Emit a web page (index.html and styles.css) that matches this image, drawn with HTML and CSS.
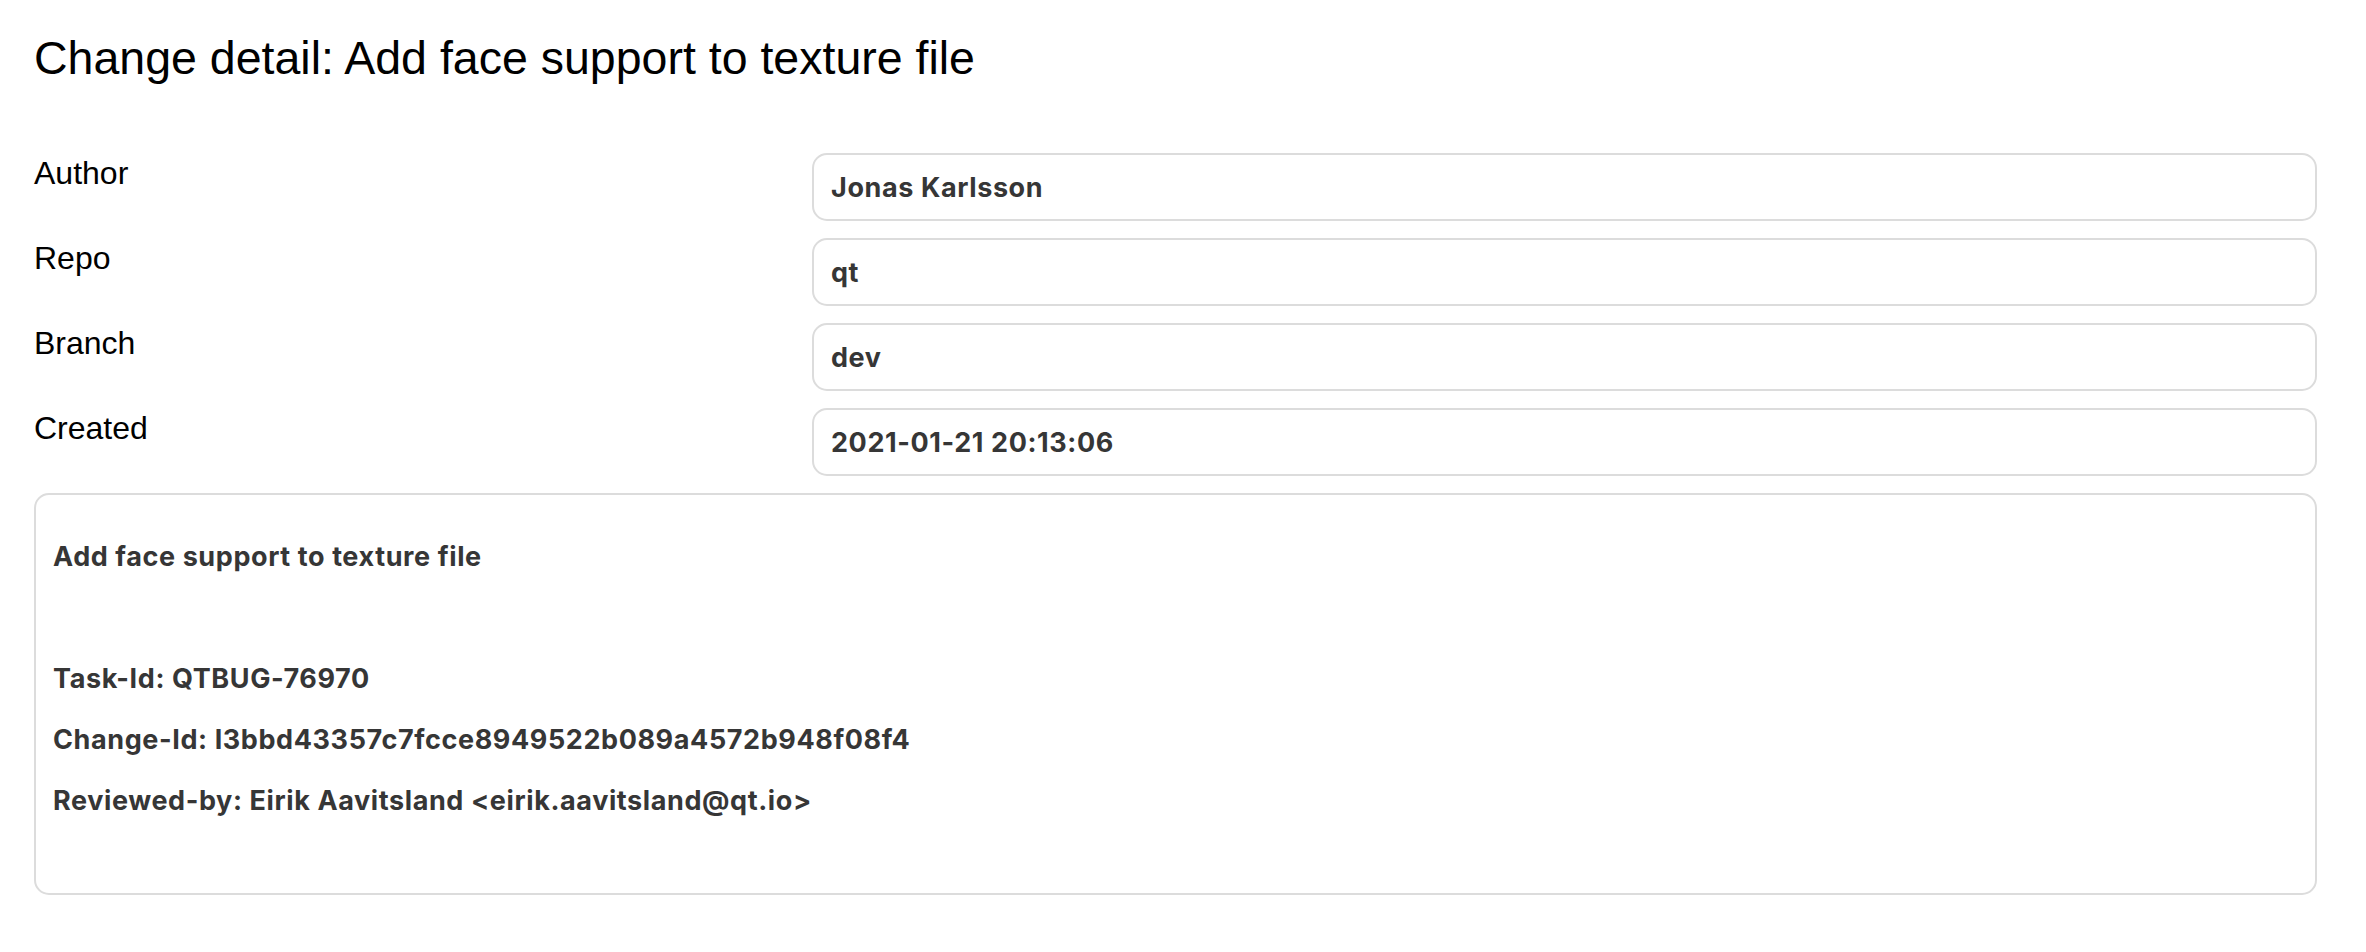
FILE: index.html
```html
<!DOCTYPE html>
<html lang="en">
<head>
<meta charset="utf-8">
<title>Change detail</title>
<link rel="stylesheet" href="styles.css">
</head>
<body>
<main class="page">
  <h1 class="title">Change detail: Add face support to texture file</h1>
  <div class="fields">
    <div class="label">Author</div>
    <div class="value">Jonas Karlsson</div>
    <div class="label">Repo</div>
    <div class="value">qt</div>
    <div class="label">Branch</div>
    <div class="value">dev</div>
    <div class="label">Created</div>
    <div class="value">2021-01-21 20:13:06</div>
    <div class="message">
      <div class="line">Add face support to texture file</div>
      <div class="line empty"></div>
      <div class="line">Task-Id: QTBUG-76970</div>
      <div class="line">Change-Id: I3bbd43357c7fcce8949522b089a4572b948f08f4</div>
      <div class="line">Reviewed-by: Eirik Aavitsland &lt;eirik.aavitsland@qt.io&gt;</div>
    </div>
  </div>
</main>
</body>
</html>
```
FILE: styles.css
```css
html, body {
  margin: 0;
  padding: 0;
  background: #ffffff;
}

.page {
  padding: 32px 49px 0 34px;
  font-family: "Liberation Sans", Arial, sans-serif;
  color: #000;
}

.title {
  margin: 0 0 68px 0;
  font-size: 46.5px;
  font-weight: 400;
  line-height: 53px;
}

.fields {
  display: grid;
  grid-template-columns: 778px 1fr;
  grid-template-rows: repeat(4, 68px) auto;
  row-gap: 17px;
}

.label {
  font-size: 32px;
  line-height: 36px;
  padding-top: 2px;
}

.value {
  box-sizing: border-box;
  height: 68px;
  border: 2px solid #dcdcdc;
  border-radius: 15px;
  padding: 0 17px;
  display: flex;
  align-items: center;
  font-family: Inter, "Liberation Sans", sans-serif;
  font-weight: 700;
  font-size: 27px;
  letter-spacing: 0.6px;
  color: #363636;
}

.message {
  grid-column: 1 / -1;
  box-sizing: border-box;
  height: 402px;
  border: 2px solid #dcdcdc;
  border-radius: 15px;
  padding: 31px 17px 0 17px;
  font-family: Inter, "Liberation Sans", sans-serif;
  font-weight: 700;
  font-size: 27px;
  letter-spacing: 0.6px;
  color: #363636;
}

.line {
  line-height: 61px;
  height: 61px;
}
```
